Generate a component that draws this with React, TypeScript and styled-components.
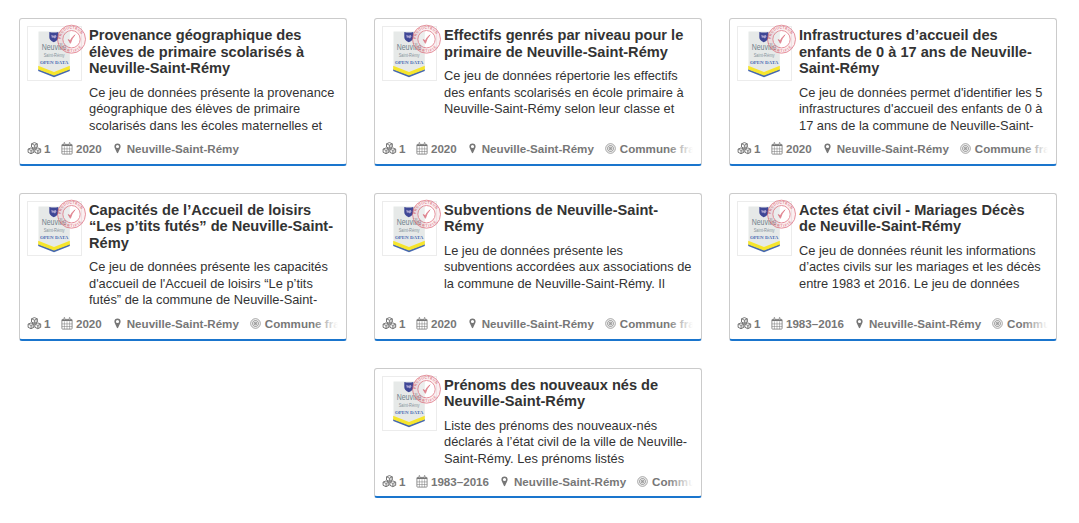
import React from 'react';
import styled, { createGlobalStyle } from 'styled-components';

const GlobalStyle = createGlobalStyle`
  * { box-sizing: border-box; }
  body {
    margin: 0;
    background: #fff;
    font-family: "Liberation Sans", Arial, sans-serif;
    color: #333;
  }
`;

const Page = styled.main`
  width: 1079px;
  height: 523px;
  padding: 18.4px 22px 0 19px;
  display: flex;
  flex-wrap: wrap;
  justify-content: center;
  align-content: flex-start;
  gap: 26.7px 27px;
  overflow: hidden;
`;

const Card = styled.article<{ $short?: boolean }>`
  width: 328px;
  height: ${(p) => (p.$short ? 130 : 148)}px;
  padding: 7px 8px ${(p) => (p.$short ? 6.4 : 7.8)}px 7px;
  display: flex;
  flex-direction: column;
  justify-content: space-between;
  background: #fff;
  border: 1px solid #cbcbcb;
  border-bottom: 2px solid #1a75cd;
  border-radius: 3px;
`;

const Main = styled.div`
  display: flex;
  gap: 7px;
`;

const Thumb = styled.div`
  flex: none;
  width: 55px;
  height: 55px;
  border: 1px solid #ececec;

  svg { display: block; margin: -1px; overflow: visible; }
`;

const Body = styled.div`
  min-width: 0;
  white-space: pre;
`;

const Title = styled.h2`
  margin: 1px 0 8.2px;
  font-size: 14.6px;
  line-height: 16.4px;
  font-weight: 700;
  color: #333;
`;

const Description = styled.p`
  margin: 0;
  font-size: 12.83px;
  line-height: 16.4px;
`;

const Footer = styled.footer`
  position: relative;
  height: 16px;
  display: flex;
  align-items: center;
  gap: 11px;
  overflow: hidden;
  white-space: nowrap;
  font-size: 11.6px;
  font-weight: 700;
  color: #777;
`;

const Fade = styled.span`
  position: absolute;
  top: 0;
  right: 0;
  width: 26px;
  height: 100%;
  background: linear-gradient(to right, rgba(255, 255, 255, 0), #fff);
`;

const Meta = styled.span<{ $gap: number; $indent?: number }>`
  flex: none;
  display: flex;
  align-items: center;
  gap: ${(p) => p.$gap}px;
  margin-left: ${(p) => p.$indent ?? 0}px;

  svg { flex: none; display: block; }
`;

function Cube({ x, y }: { x: number; y: number }) {
  return (
    <g transform={`translate(${x} ${y})`}>
      <path d="M0.5 1.7 3.4.5 6.3 1.7v3.2L3.4 6.3.5 4.9z" fill="none" stroke="#777" strokeWidth="1" strokeLinejoin="round" />
      <path d="M.5 1.7 3.4 3 6.3 1.7M3.4 3v3.3" fill="none" stroke="#777" strokeWidth=".9" />
      <path d="M3.4 3 6.3 1.7v3.2L3.4 6.3z" fill="#777" fillOpacity=".3" />
    </g>
  );
}

const CubesIcon = () => (
  <svg width="15" height="13" viewBox="0 0 15 13">
    <Cube x={4} y={0.1} />
    <Cube x={0.6} y={5.4} />
    <Cube x={7.4} y={5.4} />
  </svg>
);

const CalendarIcon = () => (
  <svg width="12" height="13" viewBox="0 0 12 13" fill="none" stroke="#777">
    <rect x=".9" y="2.4" width="10.2" height="9.7" rx=".7" strokeWidth=".8" />
    <path d="M.9 3.3h10.2" strokeWidth="1.5" />
    <path d="M.9 6.9h10.2M.9 9.5h10.2M3.4 4.3v7.8M6 4.3v7.8M8.6 4.3v7.8" strokeWidth=".5" />
    <path d="M3.4 .9v2.3M8.6 .9v2.3" strokeWidth="1.5" strokeLinecap="round" />
    <path d="M3.4 1v2M8.6 1v2" stroke="#fff" strokeWidth=".4" />
  </svg>
);

const PinIcon = () => (
  <svg width="7" height="11" viewBox="0 0 7 11">
    <path
      fill="#777"
      fillRule="evenodd"
      d="M3.5.4A3.1 3.1 0 0 0 .4 3.5c0 .6.1 1 .3 1.4L2.9 9.7c.2.6 1 .6 1.2 0l2.2-4.8c.2-.4.3-.8.3-1.4A3.1 3.1 0 0 0 3.5.4zm0 1.5a1.6 1.6 0 1 1 0 3.2 1.6 1.6 0 0 1 0-3.2z"
    />
  </svg>
);

const TargetIcon = () => (
  <svg width="11" height="11" viewBox="0 0 11 11" fill="none" stroke="#777">
    <circle cx="5.5" cy="5.5" r="4.8" strokeWidth=".7" />
    <circle cx="5.5" cy="5.5" r="3" strokeWidth=".8" />
    <circle cx="5.5" cy="5.5" r="1.3" strokeWidth=".9" />
    <circle cx="5.5" cy="5.5" r=".5" fill="#777" stroke="none" />
  </svg>
);

function Logo({ id }: { id: string }) {
  return (
    <svg width="55" height="55" viewBox="0 0 55 55">
      <path d="M11.5 5.5h31.3v37.6L27 49.5 11.5 43z" fill="#e6e9e8" />
      <path d="M11.2 45v-2L27 49.1 42.8 43v2L27 51.2z" fill="#4668b0" />
      <path d="M11.2 39.8 27 45.9 42.8 39.8v3.6L27 49.5 11.2 43.4z" fill="#f6e52c" />
      <path d="M22.3 6.1q4.5 1 9 0v5.2q0 3.2-4.5 5-4.5-1.8-4.5-5z" fill="#3f4796" />
      <path d="M24.3 8.7l2 1 2.6-.6.6 1.5-1.5 1.8-1.7-1-1.5.3z" fill="#a9a3d0" />
      <text x="14.7" y="24.4" fontSize="9" textLength="24.8" lengthAdjust="spacingAndGlyphs" fill="#71818a">Neuville</text>
      <text x="16.7" y="30.5" fontSize="6.2" textLength="20.8" lengthAdjust="spacingAndGlyphs" fill="#85929a">Saint-Rémy</text>
      <text x="12.9" y="38.4" fontSize="5" fontWeight="700" fontFamily="Liberation Serif, serif" textLength="28.4" lengthAdjust="spacingAndGlyphs" fill="#4a6cb5">OPEN DATA</text>
      <g opacity=".66" fill="none" stroke="#d9596a">
        <circle cx="44.5" cy="13.2" r="14" fill="#fff" fillOpacity=".35" strokeWidth="1" />
        <circle cx="44.5" cy="13.2" r="11.4" stroke="#d9596a" strokeOpacity=".14" strokeWidth="4.6" />
        <circle cx="44.5" cy="13.2" r="8.7" strokeWidth="1" />
        <path d="M41.3 13.6l2.1 3.7q1.3-5 4.6-8.5-2.8 2.2-4.8 6z" fill="#d14356" stroke="#d14356" strokeWidth=".9" strokeLinejoin="round" />
        <path id={`${id}-top`} d="M34.45 16.2A10.5 10.5 0 1 1 54.7 15.6" stroke="none" />
        <path id={`${id}-bottom`} d="M33.7 20.2A12.9 12.9 0 0 0 55.3 20.2" stroke="none" />
        <g fill="#d14356" stroke="none" fontWeight="700" fontSize="3.6">
          <text><textPath href={`#${id}-top`} startOffset="3" textLength="28">PRODUCTEUR</textPath></text>
          <text><textPath href={`#${id}-bottom`} startOffset="1" textLength="23">CERTIFIÉ</textPath></text>
        </g>
      </g>
    </svg>
  );
}

interface Dataset {
  title: string[];
  text: string[];
  years: string;
  area?: boolean;
  short?: boolean;
}

const datasets: Dataset[] = [
  {
    title: ['Provenance géographique des', 'élèves de primaire scolarisés à', 'Neuville-Saint-Rémy'],
    text: ['Ce jeu de données présente la provenance', 'géographique des élèves de primaire', 'scolarisés dans les écoles maternelles et'],
    years: '2020',
  },
  {
    title: ['Effectifs genrés par niveau pour le', 'primaire de Neuville-Saint-Rémy'],
    text: ['Ce jeu de données répertorie les effectifs', 'des enfants scolarisés en école primaire à', 'Neuville-Saint-Rémy selon leur classe et'],
    years: '2020',
    area: true,
  },
  {
    title: ['Infrastructures d’accueil des', 'enfants de 0 à 17 ans de Neuville-', 'Saint-Rémy'],
    text: ["Ce jeu de données permet d'identifier les 5", "infrastructures d'accueil des enfants de 0 à", '17 ans de la commune de Neuville-Saint-'],
    years: '2020',
    area: true,
  },
  {
    title: ['Capacités de l’Accueil de loisirs', '“Les p’tits futés” de Neuville-Saint-', 'Rémy'],
    text: ['Ce jeu de données présente les capacités', "d'accueil de l'Accueil de loisirs “Le p’tits", 'futés” de la commune de Neuville-Saint-'],
    years: '2020',
    area: true,
  },
  {
    title: ['Subventions de Neuville-Saint-', 'Rémy'],
    text: ['Le jeu de données présente les', 'subventions accordées aux associations de', 'la commune de Neuville-Saint-Rémy. Il'],
    years: '2020',
    area: true,
  },
  {
    title: ['Actes état civil - Mariages Décès', 'de Neuville-Saint-Rémy'],
    text: ['Ce jeu de données réunit les informations', 'd’actes civils sur les mariages et les décès', 'entre 1983 et 2016. Le jeu de données'],
    years: '1983–2016',
    area: true,
  },
  {
    title: ['Prénoms des nouveaux nés de', 'Neuville-Saint-Rémy'],
    text: ['Liste des prénoms des nouveaux-nés', 'déclarés à l’état civil de la ville de Neuville-', 'Saint-Rémy. Les prénoms listés'],
    years: '1983–2016',
    area: true,
    short: true,
  },
];

export default function App() {
  return (
    <>
      <GlobalStyle />
      <Page>
        {datasets.map((d, i) => (
          <Card key={i} $short={d.short}>
            <Main>
              <Thumb><Logo id={`stamp-${i}`} /></Thumb>
              <Body>
                <Title>{d.title.join('\n')}</Title>
                <Description>{d.text.join('\n')}</Description>
              </Body>
            </Main>
            <Footer>
              <Meta $gap={2}><CubesIcon />1</Meta>
              <Meta $gap={2.5}><CalendarIcon />{d.years}</Meta>
              <Meta $gap={5.5} $indent={1.5}><PinIcon />Neuville-Saint-Rémy</Meta>
              {d.area && <Meta $gap={4}><TargetIcon />Commune française</Meta>}
              <Fade />
            </Footer>
          </Card>
        ))}
      </Page>
    </>
  );
}
